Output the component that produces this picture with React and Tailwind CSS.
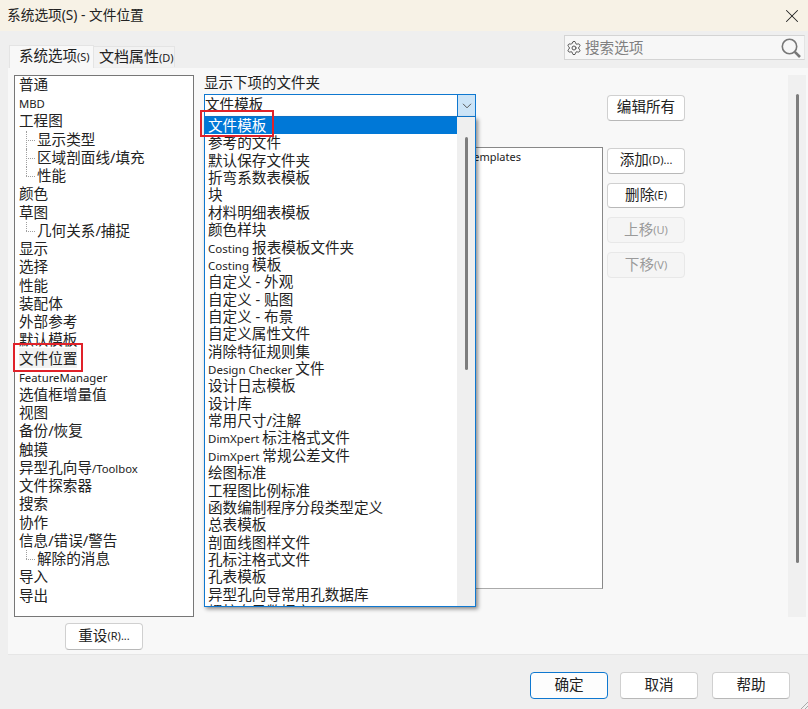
import { Settings, X } from "lucide-react";
import React from "react";

const FONT = "font-['Noto_Sans','Noto_Sans_CJK_SC',sans-serif]";

const TREE = [
  { t: "普通" },
  { t: "MBD", small: true },
  { t: "工程图" },
  { t: "显示类型", child: true, more: true },
  { t: "区域剖面线/填充", child: true, more: true },
  { t: "性能", child: true },
  { t: "颜色" },
  { t: "草图" },
  { t: "几何关系/捕捉", child: true },
  { t: "显示" },
  { t: "选择" },
  { t: "性能" },
  { t: "装配体" },
  { t: "外部参考" },
  { t: "默认模板" },
  { t: "文件位置", selected: true },
  { t: "FeatureManager", small: true },
  { t: "选值框增量值" },
  { t: "视图" },
  { t: "备份/恢复" },
  { t: "触摸" },
  { t: "异型孔向导", tail: "/Toolbox" },
  { t: "文件探索器" },
  { t: "搜索" },
  { t: "协作" },
  { t: "信息/错误/警告" },
  { t: "解除的消息", child: true },
  { t: "导入" },
  { t: "导出" },
];

const OPTIONS = [
  "文件模板",
  "参考的文件",
  "默认保存文件夹",
  "折弯系数表模板",
  "块",
  "材料明细表模板",
  "颜色样块",
  ["Costing ", "报表模板文件夹"],
  ["Costing ", "模板"],
  "自定义 - 外观",
  "自定义 - 贴图",
  "自定义 - 布景",
  "自定义属性文件",
  "消除特征规则集",
  ["Design Checker ", "文件"],
  "设计日志模板",
  "设计库",
  "常用尺寸/注解",
  ["DimXpert ", "标注格式文件"],
  ["DimXpert ", "常规公差文件"],
  "绘图标准",
  "工程图比例标准",
  "函数编制程序分段类型定义",
  "总表模板",
  "剖面线图样文件",
  "孔标注格式文件",
  "孔表模板",
  "异型孔向导常用孔数据库",
  "螺柱向导数据库",
];

const TreeRow = ({ item }) => (
  <div
    className={`relative h-[18.24px] whitespace-nowrap ${
      item.child ? "pl-[18px]" : ""
    } ${item.small ? "text-[11.3px] leading-[19px]" : "text-[14.6px] leading-[16px]"}`}
  >
    {item.child && (
      <>
        <span
          className={`absolute left-[7px] top-0 w-0 border-l border-dotted border-[#a0a0a0] ${
            item.more ? "h-full" : "h-[9px]"
          }`}
        />
        <span className="absolute left-[7px] top-[9px] w-[9px] border-t border-dotted border-[#a0a0a0]" />
      </>
    )}
    <span className={item.selected ? "bg-[#f2f2f2]" : ""}>{item.t}</span>
    {item.tail && <span className="text-[11.3px]">{item.tail}</span>}
  </div>
);

const Btn = ({ label, hint, disabled, primary, className = "" }) => (
  <button
    className={`w-[78px] rounded-[4px] border text-[14.6px] flex items-center justify-center leading-none pb-[2px] ${
      primary
        ? "bg-[#fdfdfd] border-[#0f78d0] text-[#222]"
        : disabled
          ? "bg-[#f5f5f5] border-[#e8e8e8] text-[#9a9a9a]"
          : "bg-white border-[#d0d0d0] border-b-[#b8b8b8] text-[#222]"
    } ${className}`}
  >
    {label}
    {hint && <span className="text-[11px]">{hint}</span>}
  </button>
);

const App = () => {
  return (
    <div className={`${FONT} w-[808px] h-[709px] overflow-hidden flex flex-col bg-[#efefef] text-[#222]`}>
      <div className="h-[31px] shrink-0 bg-[#f7f2e6] flex items-center justify-between pl-[7px] pr-[5px] text-[13.7px]">
        <span>系统选项(S) - 文件位置</span>
        <X size={22} strokeWidth={1.1} />
      </div>

      <div className="h-[37px] shrink-0 flex justify-between pl-[9px] pr-[3px]">
        <div className="flex items-end">
          <div className="h-[23px] w-[85px] pl-[9px] bg-[#f8f8f8] border-t border-x border-[#e4e4e4] text-[14.5px] leading-[19px] whitespace-nowrap">
            系统选项<span className="text-[11px]">(S)</span>
          </div>
          <div className="h-[21px] w-[81px] pl-[5px] mb-px bg-[#f2f2f2] border-t border-r border-[#e4e4e4] text-[15px] leading-[19px] whitespace-nowrap">
            文档属性<span className="text-[11px]">(D)</span>
          </div>
        </div>
        <div className="mt-[4px] h-[25px] w-[241px] bg-[#f7f7f7] border border-[#d4d4d4] border-r-[#e4e4e4] flex items-center pl-[1px] pr-[2px] text-[14.6px] text-[#808080]">
          <Settings size={16} strokeWidth={1.5} className="text-[#555] mr-[3px]" />
          <span className="flex-1">搜索选项</span>
          <svg width="22" height="22" viewBox="0 0 22 22" fill="none" stroke="#777">
            <circle cx="9.5" cy="9.5" r="7.2" strokeWidth="1.6" />
            <path d="M14.8 14.8 L20 20" strokeWidth="2.6" />
          </svg>
        </div>
      </div>

      <div className="h-[587px] shrink-0 ml-[8px] bg-[#f8f8f8] flex relative border-b border-[#e6e6e6]">
        <div className="w-[186px] ml-[6px] mt-[7px] shrink-0 flex flex-col items-center">
          <div className="w-[180px] self-start h-[542px] bg-white border border-[#777] pl-[4px]">
            {TREE.map((item, i) => (
              <TreeRow key={i} item={item} />
            ))}
          </div>
          <Btn label="重设" hint="(R)..." className="h-[27px] mt-[6px] -ml-[6px]" />
        </div>

        <div className="w-[399px] ml-[4px] shrink-0 relative">
          <div className="mt-[4px] h-[22px] text-[14.5px] leading-[20px]">显示下项的文件夹</div>
          <div className="w-[272px] h-[23px] bg-white border border-[#0f78d0] flex text-[14.6px]">
            <span className="flex-1 leading-[19px]">文件模板</span>
            <span className="w-[18px] bg-[#cce4f7] border-l border-[#0f78d0] flex items-center justify-center">
              <svg width="10" height="6" viewBox="0 0 10 6" fill="none" stroke="#555">
                <path d="M1 .8 L5 4.8 L9 .8" />
              </svg>
            </span>
          </div>
          <div className="mt-[30px] h-[442px] bg-white border border-[#888] border-b-[#aaa] text-right pr-[81px] pt-[1px] text-[11px] leading-[15px]">
            emplates
          </div>

          {/* open dropdown lies over the list */}
          <div className="absolute left-0 top-[49px] w-[272px] h-[490px] bg-white border-x border-b border-[#0f78d0] shadow-[2px_2px_4px_rgba(0,0,0,0.45)] flex overflow-hidden z-10">
            <div className="flex-1 text-[14.6px] overflow-hidden">
              {OPTIONS.map((o, i) => (
                <div
                  key={i}
                  className={`h-[17.37px] leading-[17.37px] pl-[3px] whitespace-nowrap ${
                    i === 0 ? "bg-[#0078d7] text-white" : ""
                  }`}
                >
                  {Array.isArray(o) ? (
                    <>
                      <span className="text-[11.5px]">{o[0]}</span>
                      {o[1]}
                    </>
                  ) : (
                    o
                  )}
                </div>
              ))}
            </div>
            <div className="w-[18px] shrink-0 bg-[#efefef] pt-[20px] flex justify-center">
              <div className="w-[3px] h-[233px] rounded-full bg-[#7d7d7d]" />
            </div>
          </div>
        </div>

        <div className="ml-[4px] pt-[27px] shrink-0 flex flex-col gap-[9px]">
          <Btn label="编辑所有" className="h-[25.8px] mb-[18px] pb-[3px]" />
          <Btn label="添加" hint="(D)..." className="h-[25.8px]" />
          <Btn label="删除" hint="(E)" className="h-[25.8px]" />
          <Btn label="上移" hint="(U)" disabled className="h-[25.8px]" />
          <Btn label="下移" hint="(V)" disabled className="h-[25.8px]" />
        </div>

        <div className="ml-auto mr-[2px] mt-[7px] w-[18px] h-[542px] bg-[#f0f0f0] pt-[19px] flex justify-center">
          <div className="w-[3px] h-[469px] rounded-full bg-[#7d7d7d]" />
        </div>

        {/* red callouts drawn over the shot */}
        <div className="absolute left-[5px] top-[275px] w-[70px] h-[29px] border-2 border-[#e0222a] pointer-events-none" />
        <div className="absolute left-[192px] top-[42px] w-[74px] h-[27px] border-2 border-[#e0222a] pointer-events-none z-20" />
      </div>

      <div className="flex-1 relative flex justify-end items-start pt-[17px] pr-[18px]">
        <Btn label="确定" primary className="mr-[12px] h-[27px]" />
        <Btn label="取消" className="mr-[14px] h-[27px]" />
        <Btn label="帮助" className="h-[27px]" />
        <svg className="absolute right-0 bottom-0" width="8" height="8" viewBox="0 0 8 8" stroke="#aaa">
          <path d="M1 8 L8 1 M5 8 L8 5" />
        </svg>
      </div>
    </div>
  );
};

export default App;
